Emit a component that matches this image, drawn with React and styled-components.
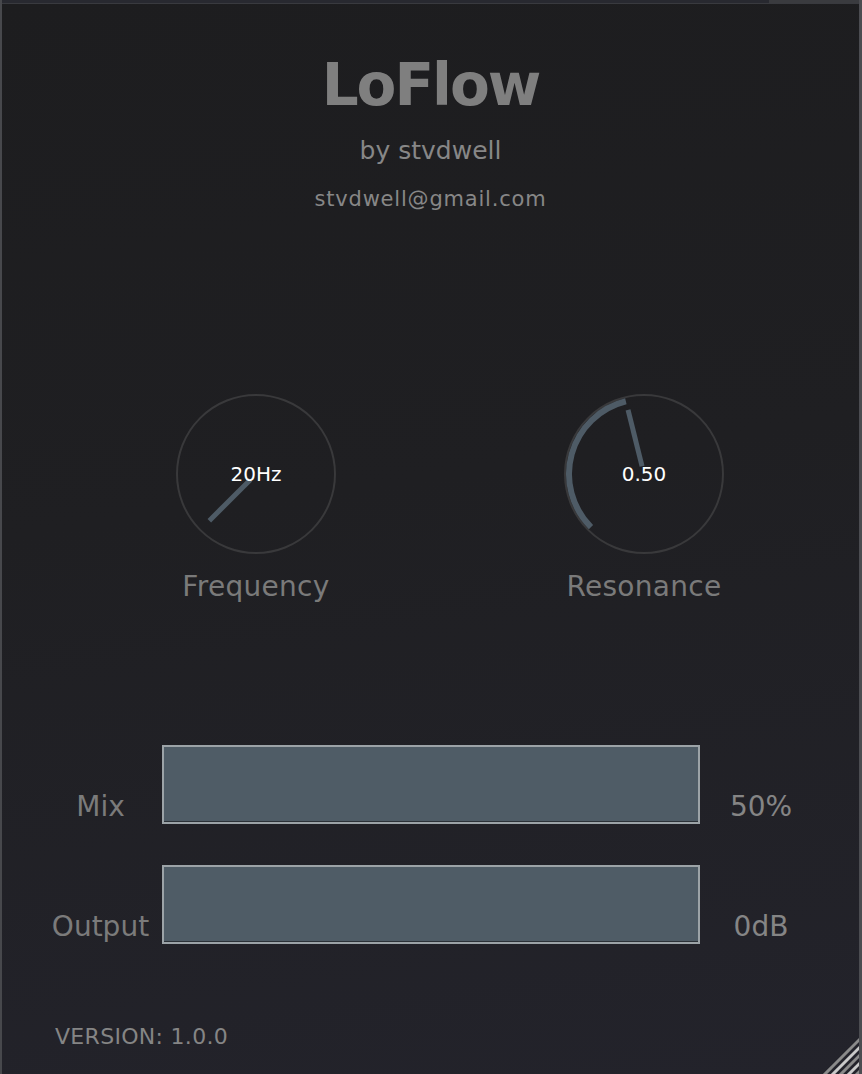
import React from 'react'
import styled, { createGlobalStyle } from 'styled-components'

const GlobalStyle = createGlobalStyle`
    html, body {
        margin: 0;
        padding: 0;
        background: #1e1e20;
    }
    body {
        font-family: "DejaVu Sans", "Liberation Sans", sans-serif;
    }
`

const Panel = styled.div`
    position: relative;
    width: 862px;
    height: 1074px;
    box-sizing: border-box;
    border-left: 2px solid #47484c;
    border-right: 3px solid #4b4c51;
    background: linear-gradient(172deg, #1d1d1f 0%, #1f1f22 45%, #23232b 100%);
    display: flex;
    flex-direction: column;
    overflow: hidden;
`

const TopStrip = styled.div`
    display: flex;
    height: 3px;
    border-bottom: 1px solid #393a3f;
`

const StripPart = styled.div`
    height: 100%;
    flex: ${props => props.width ? `0 0 ${props.width}` : '1'};
    background: ${props => props.color};
`

const Title = styled.h1`
    margin: 52px 0 0;
    text-align: center;
    font-size: 58px;
    line-height: 58px;
    font-weight: bold;
    letter-spacing: -2px;
    color: #7f7f7f;
`

const Byline = styled.div`
    margin-top: ${props => props.top}px;
    text-align: center;
    font-size: ${props => props.size}px;
    line-height: ${props => props.size}px;
    letter-spacing: ${props => props.spacing || 0}px;
    color: #878787;
`

const KnobRow = styled.div`
    display: flex;
    margin-top: 182px;
    padding-left: 172px;
    gap: 224px;
`

const KnobColumn = styled.div`
    display: flex;
    flex-direction: column;
    align-items: center;
    width: 164px;
`

const KnobFace = styled.div`
    display: grid;
    width: 164px;
    height: 164px;
    place-items: center;

    & > * {
        grid-area: 1 / 1;
    }
`

const KnobValue = styled.span`
    font-size: 20px;
    line-height: 20px;
    color: #ffffff;
`

const KnobLabel = styled.div`
    margin-top: 17px;
    font-size: 28px;
    line-height: 28px;
    letter-spacing: 0.3px;
    color: #7a7a7a;
    white-space: nowrap;
`

const SliderGrid = styled.div`
    display: grid;
    grid-template-columns: 123px 538px 122px;
    grid-auto-rows: 79px;
    row-gap: 41px;
    margin: 144px 0 0 37px;
`

const SideText = styled.div`
    align-self: end;
    margin-bottom: 1px;
    text-align: center;
    font-size: 28px;
    line-height: 32px;
    color: ${props => props.light ? '#858585' : '#7b7b7b'};
`

const SliderBar = styled.div`
    box-sizing: border-box;
    border: 2px solid #9ca3a7;
    background: #4f5c66;
    box-shadow: inset 0 -1px 0 #2b3137;
`

const Version = styled.div`
    margin: 82px 0 0 53px;
    font-size: 22px;
    line-height: 22px;
    letter-spacing: 0.3px;
    color: #858585;
`

const ResizeCorner = styled.svg`
    position: absolute;
    right: -3px;
    bottom: 0;
`

const point = (angle, r) => {
    const a = angle * Math.PI / 180
    return [82 + r * Math.sin(a), 82 - r * Math.cos(a)]
}

const Knob = ({ angle, value, label, arc }) => {
    const [x1, y1] = point(angle, 8)
    const [x2, y2] = point(angle, 66)
    const [ax, ay] = point(-135, 75)
    const [bx, by] = point(angle, 75)
    const large = angle + 135 > 180 ? 1 : 0

    return (
        <KnobColumn>
            <KnobFace>
                <svg width="164" height="164" viewBox="0 0 164 164">
                    <circle cx="82" cy="82" r="79" fill="none" stroke="#39393b" strokeWidth="2" />
                    {arc && (
                        <path
                            d={`M ${ax} ${ay} A 75 75 0 ${large} 1 ${bx} ${by}`}
                            fill="none"
                            stroke="#4e5b66"
                            strokeWidth="6"
                        />
                    )}
                    <line x1={x1} y1={y1} x2={x2} y2={y2} stroke="#4e5b66" strokeWidth="5" />
                </svg>
                <KnobValue>{value}</KnobValue>
            </KnobFace>
            <KnobLabel>{label}</KnobLabel>
        </KnobColumn>
    )
}

export default class App extends React.Component {
    render() {
        return (
            <Panel>
                <GlobalStyle />
                <TopStrip>
                    <StripPart width="767px" color="#282930" />
                    <StripPart color="#3a3b3f" />
                </TopStrip>

                <Title>LoFlow</Title>
                <Byline top={24} size={25}>by stvdwell</Byline>
                <Byline top={26} size={21} spacing={0.8}>stvdwell@gmail.com</Byline>

                <KnobRow>
                    <Knob angle={-135} value="20Hz" label="Frequency" />
                    <Knob angle={-14} value="0.50" label="Resonance" arc />
                </KnobRow>

                <SliderGrid>
                    <SideText>Mix</SideText>
                    <SliderBar />
                    <SideText light>50%</SideText>

                    <SideText>Output</SideText>
                    <SliderBar />
                    <SideText light>0dB</SideText>
                </SliderGrid>

                <Version>VERSION: 1.0.0</Version>

                <ResizeCorner width="42" height="42" viewBox="0 0 42 42">
                    <line x1="3" y1="44" x2="44" y2="3" stroke="#8a8a8a" strokeWidth="3" />
                    <line x1="11" y1="44" x2="44" y2="11" stroke="#c9c9c9" strokeWidth="3" />
                    <line x1="19" y1="44" x2="44" y2="19" stroke="#8a8a8a" strokeWidth="3" />
                    <line x1="27" y1="44" x2="44" y2="27" stroke="#c9c9c9" strokeWidth="3" />
                    <line x1="35" y1="44" x2="44" y2="35" stroke="#8a8a8a" strokeWidth="3" />
                </ResizeCorner>
            </Panel>
        )
    }
}
